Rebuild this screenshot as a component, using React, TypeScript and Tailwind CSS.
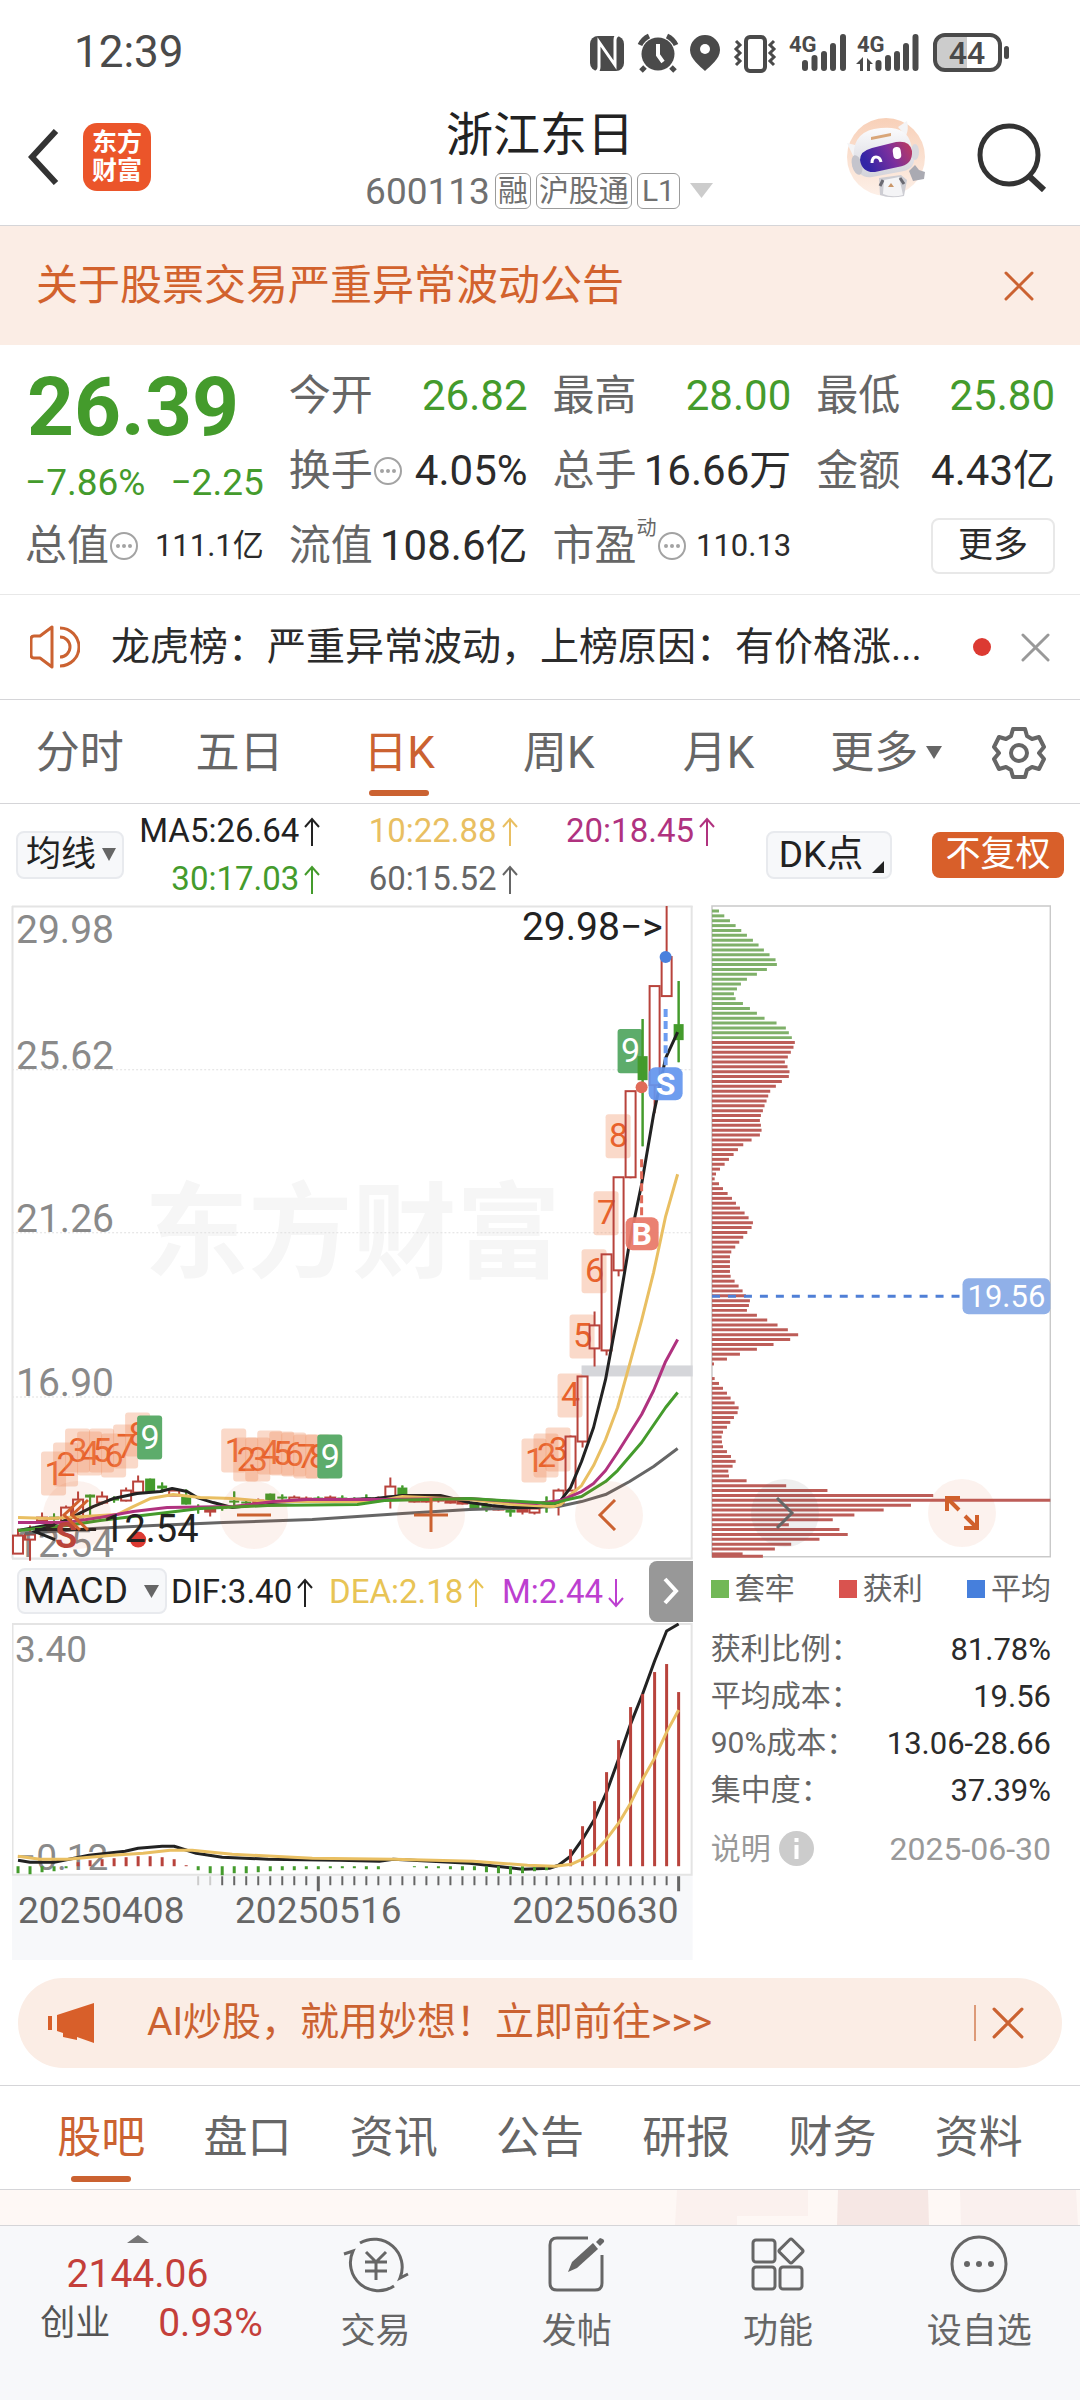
import React from 'react';

const COLORS = {
  red: '#b8433c',
  green: '#449b2c',
  orange: '#e8622c',
  black: '#222222',
  yellow: '#e9bf62',
  magenta: '#b0327f',
  gray: '#666666',
};

type Pt = [number, number];
const line = (pts: Pt[]) => pts.map((p) => p.join(',')).join(' ');

/* ---------- chart data ---------- */

// index, high, top of body, bottom of body, low, rising
type Candle = [number, number, number, number, number, boolean];
const candles: Candle[] = [
  [0, 1528, 1535, 1553, 1553, true],
  [1, 1525, 1534, 1539, 1560, true],
  [2, 1512, 1517, 1520, 1522, true],
  [3, 1513, 1516, 1519, 1520, false],
  [4, 1505, 1507, 1521, 1523, true],
  [5, 1491, 1499, 1517, 1519, true],
  [6, 1494, 1494, 1497, 1515, false],
  [7, 1491, 1496, 1502, 1504, true],
  [8, 1496, 1498, 1500, 1502, false],
  [9, 1487, 1490, 1500, 1501, true],
  [10, 1475, 1481, 1492, 1493, true],
  [11, 1478, 1478, 1492, 1492, false],
  [12, 1482, 1485, 1488, 1492, false],
  [13, 1489, 1490, 1495, 1495, true],
  [14, 1489, 1496, 1504, 1504, false],
  [15, 1504, 1507, 1509, 1513, false],
  [16, 1507, 1509, 1511, 1516, true],
  [17, 1505, 1506, 1508, 1510, false],
  [18, 1491, 1500, 1502, 1507, false],
  [19, 1500, 1501, 1503, 1504, false],
  [20, 1498, 1500, 1502, 1503, true],
  [21, 1493, 1493, 1500, 1500, false],
  [22, 1494, 1496, 1498, 1499, false],
  [23, 1495, 1497, 1500, 1502, true],
  [24, 1496, 1498, 1500, 1501, true],
  [25, 1496, 1497, 1499, 1501, false],
  [26, 1495, 1497, 1499, 1500, true],
  [27, 1495, 1497, 1499, 1501, false],
  [28, 1497, 1498, 1500, 1502, false],
  [29, 1494, 1497, 1499, 1501, false],
  [30, 1496, 1498, 1500, 1501, true],
  [31, 1477, 1486, 1496, 1508, true],
  [32, 1485, 1487, 1495, 1496, false],
  [33, 1497, 1499, 1501, 1502, true],
  [34, 1497, 1499, 1501, 1502, true],
  [35, 1497, 1498, 1500, 1502, true],
  [36, 1499, 1500, 1502, 1503, true],
  [37, 1499, 1501, 1503, 1504, true],
  [38, 1503, 1503, 1508, 1509, false],
  [39, 1502, 1504, 1509, 1511, false],
  [40, 1505, 1507, 1509, 1510, true],
  [41, 1507, 1509, 1512, 1516, false],
  [42, 1508, 1509, 1511, 1514, true],
  [43, 1506, 1508, 1512, 1514, true],
  [44, 1496, 1503, 1506, 1512, false],
  [45, 1488, 1490, 1503, 1515, true],
  [46, 1435, 1436, 1490, 1490, true],
  [47, 1376, 1376, 1441, 1447, true],
  [48, 1311, 1325, 1348, 1366, true],
  [49, 1254, 1254, 1350, 1355, true],
  [50, 1177, 1177, 1270, 1276, true],
  [51, 1091, 1091, 1177, 1178, true],
  [52, 1019, 1056, 1080, 1146, false],
  [53, 986, 986, 1085, 1113, true],
  [54, 906, 957, 996, 996, true],
  [55, 981, 1024, 1040, 1062, false],
];

const ma5: Pt[] = [[18, 1530], [35, 1527], [60, 1522], [77, 1514], [93, 1506], [113, 1498], [137, 1493], [160, 1491], [172, 1488], [187, 1491], [197, 1497], [213, 1502], [232, 1507], [250, 1505], [268, 1502], [295, 1501], [375, 1498], [402, 1495], [440, 1495], [469, 1502], [491, 1505], [513, 1507], [536, 1507], [553, 1504], [560, 1500], [570, 1487], [581, 1461], [593, 1427], [605, 1379], [617, 1314], [629, 1242], [641, 1184], [653, 1114], [665, 1058], [677, 1032]];
const ma10: Pt[] = [[18, 1517], [50, 1518], [100, 1515], [117, 1514], [133, 1506], [150, 1498], [173, 1494], [200, 1497], [233, 1498], [268, 1501], [375, 1501], [402, 1496], [469, 1499], [513, 1504], [553, 1506], [560, 1504], [570, 1494], [581, 1485], [593, 1465], [605, 1439], [617, 1407], [629, 1364], [641, 1320], [653, 1272], [665, 1216], [677, 1174]];
const ma20: Pt[] = [[18, 1522], [67, 1522], [100, 1517], [133, 1511], [167, 1507], [233, 1506], [273, 1501], [307, 1499], [375, 1499], [469, 1498], [536, 1503], [560, 1500], [581, 1491], [593, 1483], [605, 1470], [617, 1452], [629, 1433], [641, 1414], [653, 1390], [665, 1361], [677, 1339]];
const ma30: Pt[] = [[18, 1530], [67, 1525], [100, 1520], [133, 1516], [167, 1512], [200, 1508], [267, 1505], [357, 1504], [384, 1500], [469, 1498], [553, 1503], [563, 1500], [581, 1496], [605, 1481], [617, 1470], [641, 1442], [665, 1407], [677, 1392]];
const ma60: Pt[] = [[25, 1533], [93, 1528], [153, 1525], [223, 1522], [312, 1519], [402, 1513], [469, 1509], [558, 1506], [581, 1501], [605, 1494], [629, 1481], [653, 1466], [677, 1448]];

// digit, left, top
type Mark = [number, number, number];
const marks: Mark[] = [
  [1, 41, 1451], [2, 53, 1442], [3, 65, 1428], [4, 77, 1431], [5, 89, 1428], [6, 101, 1433], [7, 113, 1424], [8, 125, 1412], [9, 137, 1415],
  [1, 221, 1428], [2, 233, 1437], [3, 245, 1437], [4, 257, 1430], [5, 269, 1431], [6, 281, 1432], [7, 293, 1434], [8, 305, 1434], [9, 317, 1434],
  [1, 521, 1438], [2, 533, 1433], [3, 545, 1427], [4, 557, 1373], [5, 569, 1314], [6, 581, 1249], [7, 593, 1191], [8, 605, 1114], [9, 617, 1029],
];

const dif: Pt[] = [[18, 1859], [30, 1861], [54, 1861], [89, 1854], [125, 1850], [138, 1847], [162, 1845], [174, 1845], [196, 1852], [222, 1856], [268, 1858], [339, 1859], [379, 1860], [393, 1858], [469, 1862], [496, 1865], [522, 1868], [549, 1867], [558, 1864], [570, 1855], [582, 1838], [594, 1818], [606, 1791], [618, 1758], [630, 1723], [642, 1693], [654, 1660], [666, 1630], [678, 1623]];
const dea: Pt[] = [[18, 1855], [40, 1858], [67, 1858], [112, 1854], [143, 1852], [170, 1849], [192, 1849], [232, 1853], [312, 1857], [393, 1858], [473, 1860], [527, 1864], [554, 1865], [571, 1863], [582, 1858], [594, 1851], [606, 1838], [618, 1822], [630, 1802], [642, 1778], [654, 1757], [666, 1731], [678, 1709]];
const macdBars: number[] = [7, 8, 6, 5, 2, -4, -6, -7, -8, -9, -10, -10, -9, -7, -1, 4, 7, 9, 7, 7, 6, 5, 4, 4, 3, 3, 2, 2, 2, 3, 3, 0, 0, 1, 2, 2, 3, 4, 4, 6, 7, 8, 7, 5, 4, 0, -17, -40, -65, -94, -126, -159, -172, -194, -202, -174];

const chipEnds: number[] = [
  84, 100, 117, 134, 151, 168, 186, 203, 219, 236, 254, 258, 228, 198, 168, 150, 138, 129, 134, 156, 177, 198, 221, 257, 285, 294, 303,
  312, 308, 300, 291, 282, 290, 296, 294, 273, 255, 238, 232, 227, 221, 216, 210, 207, 210, 212, 207, 182, 157, 141, 128, 114, 101, 87, 75, 71, 84,
  96, 110, 123, 135, 147, 161, 173, 186, 182, 169, 157, 145, 133, 121, 117, 117, 117, 117, 119, 131, 143, 155, 165, 177, 174, 168, 198, 229, 260, 291, 322,
  298, 248, 198, 147, 108, 69, 63, 63, 71, 84, 96, 108, 119, 131, 143, 140, 129, 118, 108, 96, 92, 93, 96, 108, 120, 134, 125, 112, 114, 167,
  286, 410, 728, 1080, 661, 579, 491, 426, 294, 446, 471, 386, 301, 252, 155, 216,
];

/* ---------- icons ---------- */

function StatusIcons() {
  return (
    <svg width="450" height="44" viewBox="586 28 450 44" fill="#4a4a4a" aria-label="状态栏" role="img">
      <rect x="590" y="34" width="34" height="35" rx="8" />
      <path d="M599 65V40L615 63V38" fill="none" stroke="#fff" strokeWidth="3" />
      <path d="M596 70q3-1 3-5M618 33q-3 1-3 5" fill="none" stroke="#fff" strokeWidth="3" />
      <circle cx="658" cy="52" r="16.500" />
      <path d="M640 43a19 19 0 0 1 9-9M676 43a19 19 0 0 0-9-9" fill="none" stroke="#4a4a4a" strokeWidth="5" />
      <path d="M645 65l-4 4M671 65l4 4" stroke="#4a4a4a" strokeWidth="5" />
      <path d="M658 42v11l5 7" fill="none" stroke="#fff" strokeWidth="4" />
      <path d="M705 33a15 15 0 0 1 15 15c0 9-10 16-15 21-5-5-15-12-15-21a15 15 0 0 1 15-15z" />
      <circle cx="705" cy="47" r="5" fill="#fff" />
      <rect x="746" y="35" width="19" height="34" rx="4" fill="none" stroke="#4a4a4a" strokeWidth="4" />
      <path d="M736 39l4 4-4 4 4 4-4 4 4 4-4 4M774 39l-4 4 4 4-4 4 4 4-4 4 4 4" fill="none" stroke="#4a4a4a" strokeWidth="3" />
      <g stroke="#4a4a4a" strokeWidth="6" strokeLinecap="round">
        <path d="M805 61v5M814.500 56v10M824 52v14M833 44v22M843 35v31" />
        <path d="M878.500 61v5M888 56v10M897 52v14M906 44v22M915.500 35v31" />
      </g>
      <text x="789" y="50" fontSize="22" fontWeight="700">4G</text>
      <text x="857" y="50" fontSize="22" fontWeight="700">4G</text>
      <path d="M856 62l7-7v14h-3v-7zM873 62l-6-6v13h3v-7z" />
      <path d="M946 32h21v36h-21q-11 0-11-11V43q0-11 11-11z" fill="#cccccc" />
      <rect x="935" y="33" width="65" height="35" rx="10" fill="none" stroke="#4a4a4a" strokeWidth="4" />
      <rect x="1004" y="44" width="5" height="13" rx="2.500" />
      <text x="967" y="62" fontSize="32" fontWeight="500" textAnchor="middle">44</text>
    </svg>
  );
}

function Robot() {
  return (
    <svg width="80" height="82" viewBox="0 0 80 82" aria-hidden="true">
      <defs>
        <linearGradient id="visor" x1="0" y1="0.300" x2="1" y2="0">
          <stop offset="0" stopColor="#3326a6" />
          <stop offset="0.500" stopColor="#7a2f9e" />
          <stop offset="1" stopColor="#c23c5a" />
        </linearGradient>
        <linearGradient id="halo" x1="0" y1="0" x2="0" y2="1">
          <stop offset="0" stopColor="#f8d0b8" />
          <stop offset="1" stopColor="#fdf0e8" />
        </linearGradient>
        <linearGradient id="shell" x1="0" y1="0" x2="0" y2="1">
          <stop offset="0" stopColor="#fbfbfd" />
          <stop offset="1" stopColor="#d3d3da" />
        </linearGradient>
      </defs>
      <circle cx="40" cy="41" r="39" fill="url(#halo)" />
      <path d="M33 62l22-3 6 5-3 16q-14 3-24-1z" fill="#cdcdd3" />
      <path d="M38 64l15-3 4 18q-11 3-20-1z" fill="#f4f4f6" />
      <path d="M37 64l-3 6M54 62l4 6" stroke="#6a6a72" strokeWidth="3" />
      <path d="M63 55l6-6 4 5 6 2-1 7-11 2z" fill="#aaaab2" />
      <path d="M9 44l-8-17 12 3zM52 11l9-6q2 8-1 15z" fill="#f4f4f6" />
      <path d="M8 45q-3-27 20-32 32-6 37 15l3 14q1 12-15 14l-27 5q-14 2-18-16z" fill="url(#shell)" />
      <ellipse cx="11" cy="49" rx="5" ry="10" fill="#c4c4cc" transform="rotate(-15 11 49)" />
      <ellipse cx="69" cy="36" rx="4" ry="8" fill="#d8d8de" />
      <path d="M14 44q0-9 12-12l24-6q14-2 16 9 1 14-14 16l-23 5q-13 1-15-12z" fill="url(#visor)" />
      <path d="M26 47q0-6 4-6t5 5" fill="none" stroke="#fff" strokeWidth="3" />
      <rect x="47" y="31" width="8" height="12" rx="4" fill="#fff" transform="rotate(-8 51 37)" />
      <path d="M25 21l20-4v3l-20 4z" fill="#d9a679" />
      <path d="M45 67l3 4h-6z" fill="#c99669" />
    </svg>
  );
}

function CloseIcon({ color, size }: { color: string; size: number }) {
  return (
    <svg width={size} height={size} viewBox="0 0 30 30" stroke={color} strokeWidth="3" strokeLinecap="round" aria-hidden="true">
      <path d="M2 2l26 26M28 2L2 28" />
    </svg>
  );
}

function More() {
  return (
    <svg width="30" height="30" viewBox="0 0 30 30" className="shrink-0" aria-hidden="true">
      <circle cx="15" cy="15" r="13" fill="none" stroke="#a3a3a3" strokeWidth="2" />
      <circle cx="9" cy="15" r="2" fill="#a3a3a3" />
      <circle cx="15" cy="15" r="2" fill="#a3a3a3" />
      <circle cx="21" cy="15" r="2" fill="#a3a3a3" />
    </svg>
  );
}

function Arrow({ down = false }: { down?: boolean }) {
  return (
    <svg width="18" height="30" viewBox="0 0 18 30" fill="none" stroke="currentColor" strokeWidth="2" className="ml-1 inline-block align-[-5px]" role="img" aria-label={down ? '下降' : '上升'}>
      <path d={down ? 'M9 1v26M2 20l7 8 7-8' : 'M9 29V3M2 10l7-8 7 8'} />
    </svg>
  );
}

/* ---------- quote cells ---------- */

function Quote({ label, value, extra, tone = 'dark', small = false }: { label: string; value: string; extra?: React.ReactNode; tone?: 'dark' | 'green'; small?: boolean }) {
  return (
    <div className="flex h-[75px] items-center justify-between whitespace-nowrap">
      <dt className="flex items-center text-[42px] text-[#666666]">
        {label}
        {extra}
      </dt>
      <dd className={(small ? 'text-[31px] ' : 'text-[42px] ') + (tone === 'green' ? 'text-[#449b2c]' : 'text-[#2b2b2b]')}>{value}</dd>
    </div>
  );
}

/* ---------- charts ---------- */

function KChart() {
  return (
    <svg viewBox="12 905 680 654" className="block h-auto w-full overflow-visible" role="img" aria-label="日K线图">
      <text x="352" y="1270" textAnchor="middle" fontSize="104" fontWeight="700" fill="#f6f6f6">东方财富</text>
      <g stroke="#e0e0e0" strokeWidth="1">
        <path d="M12 1069.500h680M12 1232.500h680M12 1396.500h680" strokeDasharray="2 2" />
      </g>
      <path d="M12.500 906v652M691 906v652" stroke="#e4e4e4" strokeWidth="2" />
      <path d="M12 906.500h680M12 1558h680" stroke="#e4e4e4" strokeWidth="2" />
      <rect x="581" y="1365" width="111" height="11" fill="#d5d6da" />
      <g fontSize="39" fill="#8a8a8a">
        <text x="16" y="943">29.98</text>
        <text x="16" y="1069">25.62</text>
        <text x="16" y="1232">21.26</text>
        <text x="16" y="1396">16.90</text>
        <text x="16" y="1556">12.54</text>
      </g>
      {marks.map(([n, x, y], i) => (
        <g key={i}>
          <rect x={x} y={y} width="25" height="44" rx="3" fill={n === 9 ? '#5dac6b' : '#f08c5a'} fillOpacity={n === 9 ? 1 : 0.33} />
          <text x={x + 13} y={y + 33} textAnchor="middle" fontSize="34" fill={n === 9 ? '#ffffff' : COLORS.orange}>{n}</text>
        </g>
      ))}
      {candles.map(([i, hi, top, bottom, lo, up]) => {
        const x = 18 + 12 * i;
        const c = up ? COLORS.red : COLORS.green;
        return (
          <g key={i} stroke={c} strokeWidth="2">
            <path d={`M${x} ${hi}V${top}M${x} ${bottom}V${lo}`} />
            <rect x={x - 5} y={top} width="10" height={bottom - top} fill={up ? 'none' : c} strokeWidth={up ? 2 : 0} />
            {!up && <path d={`M${x} ${hi}V${lo}`} />}
          </g>
        );
      })}
      <g fill="none" strokeWidth="3" strokeLinejoin="round">
        <polyline points={line(ma60)} stroke={COLORS.gray} />
        <polyline points={line(ma5)} stroke={COLORS.black} />
        <polyline points={line(ma10)} stroke={COLORS.yellow} />
        <polyline points={line(ma20)} stroke={COLORS.magenta} />
        <polyline points={line(ma30)} stroke={COLORS.green} />
      </g>
      <circle cx="665" cy="957" r="6" fill="#4a80dd" />
      <circle cx="641" cy="1087" r="6" fill="#e06a58" />
      <path d="M665 1009v56" stroke="#6c9cf0" strokeWidth="4" strokeDasharray="8 4" />
      <path d="M641 1159v58" stroke="#e06a58" strokeWidth="3" strokeDasharray="8 4" />
      <rect x="648" y="1067" width="34" height="33" rx="7" fill="#6496ee" fillOpacity="0.930" />
      <rect x="625" y="1217" width="33" height="33" rx="7" fill="#e97a6a" fillOpacity="0.950" />
      <g fontSize="32" fontWeight="700" fill="#ffffff" textAnchor="middle">
        <text x="665" y="1095">S</text>
        <text x="641" y="1245">B</text>
      </g>
      <text x="662" y="940" textAnchor="end" fontSize="39" fill="#222222">29.98−&gt;</text>
      <path d="M55 1524l-20 7 20 8M35 1529h61" fill="none" stroke="#222222" strokeWidth="3" />
      <text x="66" y="1547" textAnchor="middle" fontSize="36" fontWeight="700" fill={COLORS.red}>S</text>
      <circle cx="138" cy="1539" r="8" fill="#dc3a32" />
      <text x="103" y="1541" fontSize="38" fill="#222222">12.54</text>
    </svg>
  );
}

function MacdChart() {
  return (
    <svg viewBox="12 1622 680 337" className="block h-auto w-full" role="img" aria-label="MACD指标图">
      <rect x="12" y="1874" width="680" height="85" fill="#f7f8fa" />
      <path d="M12 1623h680M12 1873.500h680M12.500 1623v250M691 1623v250" stroke="#e4e4e4" strokeWidth="2" />
      <g fontSize="37" fill="#8a8a8a">
        <text x="15" y="1661">3.40</text>
        <text x="15" y="1869">−0.12</text>
      </g>
      <g fill="none" strokeWidth="3" strokeLinejoin="round">
        <polyline points={line(dif)} stroke={COLORS.black} />
        {macdBars.map((h, i) => (
          <path key={i} d={`M${18 + 12 * i} 1865v${h}`} stroke={h < 0 ? COLORS.red : COLORS.green} />
        ))}
        <polyline points={line(dea)} stroke={COLORS.yellow} />
      </g>
      {Array.from({ length: 41 }, (_, k) => {
        const i = k + 15;
        const major = i === 25 || i === 55;
        return <path key={i} d={`M${18 + 12 * i} 1875v${major ? 15 : 9}`} stroke={k < 2 ? '#cccccc' : '#666666'} strokeWidth={major ? 3 : 2} />;
      })}
      <g fontSize="37" fill="#666666">
        <text x="18" y="1922">20250408</text>
        <text x="318" y="1922" textAnchor="middle">20250516</text>
        <text x="678" y="1922" textAnchor="end">20250630</text>
      </g>
    </svg>
  );
}

function ChipChart() {
  return (
    <svg viewBox="710 905 341 654" className="block h-auto w-full" role="img" aria-label="筹码分布">
      <rect x="711" y="906" width="339" height="652" fill="none" stroke="#c9c9c9" strokeWidth="1.500" />
      {chipEnds.map((e, k) => (
        <path key={k} d={`M711 ${Math.min(911 + 4.88 * k, 1557.5)}h${(e - 63) / 3}`} stroke={k < 27 ? '#7fb069' : '#bd5d58'} strokeWidth="3" />
      ))}
      <path d="M711 1297h248" stroke="#4f7fd6" strokeWidth="3" strokeDasharray="8 8" />
      <rect x="962" y="1279" width="88" height="36" rx="6" fill="#90b0e8" />
      <text x="1006" y="1308" textAnchor="middle" fontSize="31" fill="#ffffff">19.56</text>
    </svg>
  );
}

const periods = ['分时', '五日', '日K', '周K', '月K'];
const averages: [string, string][] = [
  ['MA5:26.64', 'text-[#222222]'],
  ['10:22.88', 'text-[#e9bf62]'],
  ['20:18.45', 'text-[#b0327f]'],
  ['30:17.03', 'text-[#449b2c]'],
  ['60:15.52', 'text-[#666666]'],
];
const legend: [string, string][] = [
  ['套牢', 'bg-[#72b857]'],
  ['获利', 'bg-[#d9534f]'],
  ['平均', 'bg-[#467fdc]'],
];
const stats: [string, string][] = [
  ['获利比例：', '81.78%'],
  ['平均成本：', '19.56'],
  ['90%成本：', '13.06-28.66'],
  ['集中度：', '37.39%'],
];
const sections = ['股吧', '盘口', '资讯', '公告', '研报', '财务', '资料'];

const round = 'flex size-[68px] items-center justify-center rounded-full bg-[#d85f2a]/8';

export default function App() {
  return (
    <div className="flex min-h-screen flex-col bg-white font-['Roboto','Noto_Sans_CJK_SC',sans-serif] leading-none text-[#222222]">
      <div className="flex h-[100px] items-center justify-between pt-1 pr-[44px] pl-[74px]">
        <time className="text-[44px] text-[#4a4a4a]">12:39</time>
        <StatusIcons />
      </div>

      <header className="relative flex h-[126px] items-center justify-between border-b border-[#d5d5d8] px-7 pb-3">
        <div className="flex items-center gap-6">
          <button aria-label="返回">
            <svg width="31" height="56" viewBox="0 0 31 56" fill="none" stroke="#333333" strokeWidth="6">
              <path d="M28 2L4 28l24 26" />
            </svg>
          </button>
          <a href="#home" className="grid size-[68px] place-content-center rounded-[14px] bg-[#eb552a] text-center text-[25px] leading-[28px] font-bold text-white">
            <span>东方</span>
            <span>财富</span>
          </a>
        </div>
        <div className="absolute inset-x-0 top-2 mx-auto flex w-fit flex-col items-center">
          <h1 className="text-[47px] leading-[54px]">浙江东日</h1>
          <p className="flex h-[58px] items-center gap-[5px] text-[30px] text-[#707070]">
            <span className="text-[37px]">600113</span>
            <span className="flex h-9 items-center rounded-md border border-[#9b9b9b] px-0.5">融</span>
            <span className="flex h-9 items-center rounded-md border border-[#9b9b9b] px-0.5">沪股通</span>
            <span className="flex h-9 items-center rounded-md border border-[#9b9b9b] px-1">L1</span>
            <svg width="30" height="16" viewBox="0 0 30 16" aria-hidden="true"><path d="M5 0h23L16.500 15z" fill="#cccccc" /></svg>
          </p>
        </div>
        <div className="flex items-center gap-[50px]">
          <button aria-label="智能助手"><Robot /></button>
          <button aria-label="搜索">
            <svg width="76" height="70" viewBox="0 0 76 70" fill="none" stroke="#333333" strokeWidth="5">
              <circle cx="33" cy="33" r="29" />
              <path d="M53 54l15 14" strokeWidth="6" />
            </svg>
          </button>
        </div>
      </header>

      <section className="flex h-[119px] items-center justify-between bg-[#fbede5] pr-[46px] pl-9 text-[42px] text-[#d2622d]">
        <a href="#notice">关于股票交易严重异常波动公告</a>
        <button aria-label="关闭公告"><CloseIcon color="#cb6231" size={30} /></button>
      </section>

      <section className="grid grid-cols-4 gap-x-[25px] border-b border-[#e8e8e8] px-[25px] pt-[13px] pb-[11px]">
        <div className="row-span-2 flex flex-col gap-4 pt-2 whitespace-nowrap text-[#449b2c]">
          <strong className="pl-0.5 text-[82px] font-bold">26.39</strong>
          <div className="flex justify-between text-[37px]">
            <span>−7.86%</span>
            <span>−2.25</span>
          </div>
        </div>
        <Quote label="今开" value="26.82" tone="green" />
        <Quote label="最高" value="28.00" tone="green" />
        <Quote label="最低" value="25.80" tone="green" />
        <Quote label="换手" value="4.05%" extra={<More />} />
        <Quote label="总手" value="16.66万" />
        <Quote label="金额" value="4.43亿" />
        <Quote label="总值" value="111.1亿" extra={<More />} small />
        <Quote label="流值" value="108.6亿" />
        <Quote label="市盈" value="110.13" extra={<><sup className="-top-[18px] text-[20px]">动</sup><More /></>} small />
        <div className="flex h-[75px] items-center justify-end">
          <button className="h-14 w-[124px] rounded-lg border-2 border-[#e8e8e8] text-[35px] text-[#2b2b2b]">更多</button>
        </div>
      </section>

      <section className="flex h-[105px] items-center border-b border-[#d5d5d8] pr-[30px] pl-[30px]">
        <svg width="50" height="44" viewBox="0 0 50 44" fill="none" stroke="#cb6231" strokeWidth="3" aria-hidden="true">
          <path d="M22 2v40L10 33H4q-3 0-3-3V14q0-3 3-3h6z" strokeLinejoin="round" />
          <path d="M30 3a19 19 0 0 1 0 38M30 12a10 10 0 0 1 0 20" />
        </svg>
        <a href="#news" className="ml-[31px] flex-1 truncate text-[39px] leading-[56px] text-[#2b2b2b]">龙虎榜：严重异常波动，上榜原因：有价格涨...</a>
        <span className="mr-[30px] size-[18px] rounded-full bg-[#dc3a32]" />
        <button aria-label="关闭消息"><CloseIcon color="#999999" size={29} /></button>
      </section>

      <nav className="flex h-[104px] border-b border-[#d5d5d8] pt-0.5 text-[44px] text-[#666666]">
        {periods.map((p) => (
          <button key={p} className={'relative flex-1 ' + (p === '日K' ? 'text-[#cb6231]' : '')}>
            {p}
            {p === '日K' && <span className="absolute bottom-[7px] left-1/2 h-1.5 w-[60px] -translate-x-1/2 rounded-full bg-[#cb6231]" />}
          </button>
        ))}
        <button className="flex flex-1 items-center justify-center gap-2">
          <span className="ml-4">更多</span>
          <svg width="16" height="13" viewBox="0 0 16 13" aria-hidden="true"><path d="M0 0h16L8 13z" fill="#666666" /></svg>
        </button>
        <button aria-label="设置" className="flex w-[122px] items-center justify-center">
          <svg width="54" height="54" viewBox="-27 -27 54 54" fill="none" stroke="#666666" strokeWidth="4" strokeLinejoin="round">
            <path d="M-6-24H6L8-17 13-14 20-16 25-6 20 0 25 6 20 16 13 14 8 17 6 24H-6L-8 17-13 14-20 16-25 6-20 0-25-6-20-16-13-14-8-17z" />
            <circle r="8" />
          </svg>
        </button>
      </nav>

      <section className="flex h-[101px] items-center px-4">
        <label className="relative flex items-center">
          <select aria-label="均线" className="h-12 w-[108px] appearance-none rounded-lg border-2 border-[#e8eaee] bg-[#f7f8fa] pl-2 text-[35px] leading-[42px]">
            <option>均线</option>
          </select>
          <svg width="14" height="13" viewBox="0 0 14 13" className="pointer-events-none absolute right-2" aria-hidden="true"><path d="M0 0h14L7 13z" fill="#666666" /></svg>
        </label>
        <div className="grid flex-1 grid-cols-3 pr-1.5 text-right text-[33px] leading-[48px] whitespace-nowrap">
          {averages.map(([t, c]) => (
            <span key={t} className={c}>
              {t}
              <Arrow />
            </span>
          ))}
        </div>
        <button className="relative ml-11 h-12 w-[126px] rounded-lg border-2 border-[#e8eaee] bg-[#f7f8fa] pr-4 text-[37px] leading-[42px]">
          DK点
          <svg width="12" height="12" viewBox="0 0 12 12" className="absolute right-1.5 bottom-1" aria-hidden="true"><path d="M12 0v12H0z" fill="#222222" /></svg>
        </button>
        <button className="ml-10 h-[46px] w-[132px] rounded-lg bg-[#d85f2a] text-[35px] text-white">不复权</button>
      </section>

      <main className="grid grid-cols-[2fr_1fr] gap-x-[18px] pr-[29px] pl-3">
        <div>
          <div className="relative">
            <KChart />
            <div className="absolute inset-x-0 bottom-[11px] flex justify-between pr-[50px] pl-[31px]">
              <button aria-label="最早" className={round}>
                <svg width="34" height="36" viewBox="0 0 34 36" fill="none" stroke="#d0602c" strokeWidth="3"><path d="M20 3L4 18l16 15M28 3L12 18l16 15" /></svg>
              </button>
              <button aria-label="缩小" className={round}>
                <svg width="34" height="34" viewBox="0 0 34 34" stroke="#cb6231" strokeWidth="3"><path d="M0 17h34" /></svg>
              </button>
              <button aria-label="放大" className={round}>
                <svg width="34" height="34" viewBox="0 0 34 34" stroke="#cb6231" strokeWidth="3"><path d="M0 17h34M17 0v34" /></svg>
              </button>
              <button aria-label="向左" className={round}>
                <svg width="24" height="32" viewBox="0 0 24 32" fill="none" stroke="#cb6231" strokeWidth="3"><path d="M18 1L3 16l15 15" /></svg>
              </button>
            </div>
          </div>
          <div className="flex h-[63px] items-center gap-1 pl-[5px] text-[33px] whitespace-nowrap">
            <label className="relative flex items-center">
              <select aria-label="副图指标" className="h-[46px] w-[150px] appearance-none rounded-lg border-2 border-[#e8eaee] bg-[#f7f8fa] pl-1 text-[37px] leading-[42px]">
                <option>MACD</option>
              </select>
              <svg width="15" height="13" viewBox="0 0 15 13" className="pointer-events-none absolute right-2" aria-hidden="true"><path d="M0 0h15L7.500 13z" fill="#666666" /></svg>
            </label>
            <span className="w-[154px]">DIF:3.40<Arrow /></span>
            <span className="w-[169px] text-[#e8c455]">DEA:2.18<Arrow /></span>
            <span className="flex-1 text-[#bd3fd0]">M:2.44<Arrow down /></span>
            <button aria-label="展开" className="flex h-[61px] w-11 items-center justify-center rounded-l-lg bg-[#989898]">
              <svg width="16" height="28" viewBox="0 0 16 28" fill="none" stroke="#ffffff" strokeWidth="4"><path d="M2 2l11 12L2 26" /></svg>
            </button>
          </div>
          <MacdChart />
        </div>

        <aside>
          <div className="relative">
            <ChipChart />
            <div className="absolute inset-x-0 bottom-[11px] flex justify-between pr-[55px] pl-10">
              <button aria-label="向右" className="flex size-[68px] items-center justify-center rounded-full bg-[#666666]/10">
                <svg width="24" height="32" viewBox="0 0 24 32" fill="none" stroke="#666666" strokeWidth="3"><path d="M4 1l15 15L4 31" /></svg>
              </button>
              <button aria-label="全屏" className={round}>
                <svg width="34" height="34" viewBox="0 0 34 34" fill="none" stroke="#d0602c" strokeWidth="4"><path d="M2 15V2h13M2 2l12 12M32 19v13H19M32 32L20 20" /></svg>
              </button>
            </div>
          </div>
          <ul className="flex h-[62px] items-center justify-between text-[30px] text-[#666666]">
            {legend.map(([t, c]) => (
              <li key={t} className="flex items-center gap-1.5">
                <span className={'size-[18px] ' + c} />
                {t}
              </li>
            ))}
          </ul>
          <dl className="pt-1.5">
            {stats.map(([k, v]) => (
              <div key={k} className="flex h-[47px] items-center justify-between whitespace-nowrap">
                <dt className="text-[30px] text-[#666666]">{k}</dt>
                <dd className="text-[31px] text-[#2b2b2b]">{v}</dd>
              </div>
            ))}
          </dl>
          <div className="mt-2.5 flex h-[50px] items-center justify-between text-[30px] text-[#999999]">
            <button className="flex items-center gap-2">
              说明
              <svg width="35" height="35" viewBox="0 0 35 35" aria-hidden="true">
                <circle cx="17.500" cy="17.500" r="17.500" fill="#cccccc" />
                <path d="M17.500 14v14M17.500 7v4" stroke="#ffffff" strokeWidth="4" />
              </svg>
            </button>
            <time className="text-[32px]">2025-06-30</time>
          </div>
        </aside>
      </main>

      <section className="px-[18px] pt-[18px] pb-[17px]">
        <div className="flex h-[90px] items-center rounded-full bg-[#fbede5] pr-[38px] pl-[30px] text-[#cb6231]">
          <svg width="46" height="40" viewBox="0 0 46 40" fill="#d85f2a" aria-hidden="true">
            <path d="M0 13h4v14H0zM9 12L46 0v40l-17-6v3l-14-3v-4l-6-2z" />
          </svg>
          <a href="#ai" className="ml-[53px] flex-1 text-[39px]">AI炒股，就用妙想！立即前往&gt;&gt;&gt;</a>
          <span className="mr-4 h-9 w-0.5 bg-[#dd9a78]" />
          <button aria-label="关闭广告"><CloseIcon color="#cb6231" size={32} /></button>
        </div>
      </section>

      <nav className="flex h-[105px] border-y border-[#d5d5d8] px-7 pt-0.5 text-[44px] text-[#666666]">
        {sections.map((s, i) => (
          <button key={s} className={'relative flex-1 ' + (i === 0 ? 'text-[#cb6231]' : '')}>
            {s}
            {i === 0 && <span className="absolute bottom-[7px] left-1/2 h-1.5 w-[60px] -translate-x-1/2 rounded-full bg-[#cb6231]" />}
          </button>
        ))}
      </nav>

      <div className="flex h-[35px] justify-end bg-[#fef8f5]">
        <svg width="405" height="35" viewBox="675 0 405 35" aria-hidden="true">
          <path d="M677 0h131v26h-71v9h-62z" fill="#fbf1ee" />
          <path d="M838 0h90l1 35h-92z" fill="#f6e7e4" />
          <path d="M960 0h116l2 35H961z" fill="#faf0ee" />
        </svg>
      </div>

      <footer className="flex flex-1 border-t border-[#d5d5d8] bg-[#f7f8fa] text-[35px] text-[#666666]">
        <button className="flex w-[275px] flex-col items-center pt-[9px] text-[39px] text-[#c43f3a]">
          <svg width="22" height="8" viewBox="0 0 22 8" aria-hidden="true"><path d="M11 0l11 8H0z" fill="#777777" /></svg>
          <span className="mt-3">2144.06</span>
          <span className="mt-2.5 flex items-center gap-12 pl-7">
            <span className="text-[35px] text-[#555555]">创业</span>
            0.93%
          </span>
        </button>
        <nav className="flex flex-1 pt-[9px]">
          <button className="flex flex-1 flex-col items-center gap-[19px]">
            <svg width="68" height="60" viewBox="0 0 68 60" fill="none" stroke="#666666" strokeWidth="3">
              <path d="M18 8A28 28 0 0 1 58 43l8-4M52 51A28 28 0 0 1 11 16l-9 3" />
              <path d="M24 17l10 10 10-10M34 27v18M23 27h22M23 36h22" />
            </svg>
            交易
          </button>
          <button className="flex flex-1 flex-col items-center gap-[19px]">
            <svg width="58" height="60" viewBox="0 0 58 60" fill="none" stroke="#666666" strokeWidth="3">
              <path d="M40 3H9q-7 0-7 7v38q0 7 7 7h38q7 0 7-7V20" />
              <path d="M20 37l4-10 21-19 5 6-21 19z" fill="#666666" stroke="none" />
              <path d="M48 7l4-4q5 1 4 4l-4 4z" fill="#666666" stroke="none" />
            </svg>
            发帖
          </button>
          <button className="flex flex-1 flex-col items-center gap-[19px]">
            <svg width="56" height="60" viewBox="0 0 56 60" fill="none" stroke="#666666" strokeWidth="3" strokeLinejoin="round">
              <rect x="3" y="5" width="22" height="22" rx="3" />
              <rect x="3" y="32" width="22" height="22" rx="3" />
              <rect x="30" y="32" width="22" height="22" rx="3" />
              <rect x="32" y="7" width="18" height="18" rx="2" transform="rotate(45 41 16)" />
            </svg>
            功能
          </button>
          <button className="flex flex-1 flex-col items-center gap-[19px]">
            <svg width="60" height="60" viewBox="0 0 60 60" fill="#666666">
              <circle cx="30" cy="29" r="27" fill="none" stroke="#666666" strokeWidth="3" />
              <circle cx="18" cy="29" r="3" />
              <circle cx="30" cy="29" r="3" />
              <circle cx="42" cy="29" r="3" />
            </svg>
            设自选
          </button>
        </nav>
      </footer>
    </div>
  );
}
